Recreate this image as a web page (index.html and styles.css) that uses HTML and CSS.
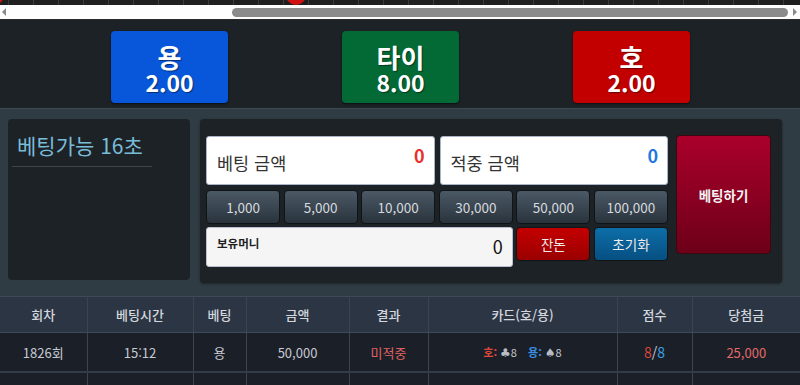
FILE: index.html
```html
<!DOCTYPE html>
<html lang="ko">
<head>
<meta charset="utf-8">
<title>베팅</title>
<link rel="stylesheet" href="styles.css">
</head>
<body>
<div class="timeline"><span class="dot dot-a"></span><span class="dot dot-b"></span></div>
<div class="hscroll">
  <span class="arr arr-l"></span>
  <div class="track"><div class="thumb"></div></div>
  <span class="arr arr-r"></span>
</div>
<div class="bets">
  <div class="bet bet-dragon"><div class="bet-name">용</div><div class="bet-odds">2.00</div></div>
  <div class="bet bet-tie"><div class="bet-name">타이</div><div class="bet-odds">8.00</div></div>
  <div class="bet bet-tiger"><div class="bet-name">호</div><div class="bet-odds">2.00</div></div>
</div>
<div class="board">
  <div class="timer"><div class="timer-title">베팅가능 16초</div></div>
  <div class="console">
    <div class="controls">
      <div class="amounts">
        <div class="amount"><span class="amount-label">베팅 금액</span><span class="amount-val val-red">0</span></div>
        <div class="amount"><span class="amount-label">적중 금액</span><span class="amount-val val-blue">0</span></div>
      </div>
      <div class="chips">
        <button class="chip">1,000</button>
        <button class="chip">5,000</button>
        <button class="chip">10,000</button>
        <button class="chip">30,000</button>
        <button class="chip">50,000</button>
        <button class="chip">100,000</button>
        <div class="wallet"><span class="wallet-label">보유머니</span><span class="wallet-val">0</span></div>
        <button class="act act-change">잔돈</button>
        <button class="act act-reset">초기화</button>
      </div>
    </div>
    <button class="place">베팅하기</button>
  </div>
</div>
<table class="history">
  <colgroup>
    <col class="c1"><col class="c2"><col class="c3"><col class="c4"><col class="c5"><col class="c6"><col class="c7"><col class="c8">
  </colgroup>
  <thead>
    <tr><th>회차</th><th>베팅시간</th><th>베팅</th><th>금액</th><th>결과</th><th>카드(호/용)</th><th>점수</th><th>당첨금</th></tr>
  </thead>
  <tbody>
    <tr>
      <td>1826회</td><td>15:12</td><td>용</td><td>50,000</td><td class="lose">미적중</td>
      <td class="cards"><span class="ct">호:</span> <span class="suit">♣</span>8 <span class="cd">용:</span> <span class="suit">♠</span>8</td>
      <td class="score"><span class="sr">8</span>/<span class="sb">8</span></td>
      <td class="win">25,000</td>
    </tr>
    <tr class="empty"><td></td><td></td><td></td><td></td><td></td><td></td><td></td><td></td></tr>
  </tbody>
</table>
</body>
</html>
```
FILE: styles.css
```css
html, body {
  margin: 0;
  padding: 0;
}
body {
  width: 800px;
  height: 385px;
  overflow: hidden;
  background: #1c2226;
  font-family: "Noto Sans CJK KR", "Noto Sans", sans-serif;
  color: #fff;
}
button {
  font-family: inherit;
  padding: 0;
  cursor: pointer;
}

/* timeline strip */
.timeline {
  position: relative;
  height: 5px;
  overflow: hidden;
  background-color: #1f1f1f;
  background-image: repeating-linear-gradient(90deg, transparent 0, transparent 8px, #3d3d3d 8px, #3d3d3d 9px, transparent 9px, transparent 25px);
}
.dot {
  position: absolute;
  width: 20px;
  height: 20px;
  border-radius: 50%;
  background: #d11212;
  top: -15px;
}
.dot-a { left: -16px; }
.dot-b { left: 286px; }

/* horizontal scrollbar */
.hscroll {
  display: flex;
  align-items: center;
  height: 14px;
  background: #fdfdfd;
  border-bottom: 1px solid #2b2b2b;
}
.arr {
  width: 0;
  height: 0;
  border-top: 4px solid transparent;
  border-bottom: 4px solid transparent;
}
.arr-l {
  margin-left: 2px;
  border-right: 4px solid #8a8a8a;
}
.arr-r {
  margin-right: 3px;
  border-left: 4px solid #8a8a8a;
}
.track {
  flex: 1;
  display: flex;
  justify-content: flex-end;
  padding-right: 5px;
}
.thumb {
  width: 556px;
  height: 9px;
  border-radius: 5px;
  background: #8b8b8b;
}

/* bet buttons */
.bets {
  height: 88px;
  box-sizing: border-box;
  padding-top: 11px;
  display: flex;
  justify-content: center;
  gap: 114px;
  padding-left: 1px;
}
.bet {
  width: 117px;
  height: 72px;
  border-radius: 4px;
  box-sizing: border-box;
  padding-top: 12px;
  text-align: center;
  font-weight: 700;
  box-shadow: 0 1px 2px rgba(0,0,0,.6);
  text-shadow: 1px 1px 1px rgba(0,0,0,.45);
}
.bet-dragon { background: #0857da; }
.bet-tie { background: #036935; }
.bet-tiger { background: #c20000; }
.bet-name {
  font-size: 26px;
  line-height: 27px;
}
.bet-odds {
  font-size: 23px;
  line-height: 24px;
}

/* board */
.board {
  display: flex;
  align-items: flex-start;
  gap: 10px;
  height: 188px;
  box-sizing: border-box;
  padding: 10px 18px 0 8px;
  background: #303c43;
  border-top: 1px solid #3d4a52;
}
.timer {
  width: 182px;
  height: 161px;
  box-sizing: border-box;
  padding: 12px 4px 0;
  background: #1c2226;
  border-radius: 4px;
}
.timer-title {
  width: 140px;
  padding: 0 0 7px 5px;
  box-sizing: border-box;
  font-size: 21px;
  line-height: 28px;
  color: #79bcd8;
  border-bottom: 1px solid #3b4448;
}
.console {
  flex: 1;
  display: flex;
  align-items: flex-start;
  gap: 8px;
  height: 164px;
  box-sizing: border-box;
  padding: 16px 11px 0 6px;
  background: #1c2226;
  border-radius: 4px;
  box-shadow: 0 1px 3px rgba(0,0,0,.4);
}
.controls {
  flex: 1;
  padding-top: 1px;
}
.amounts {
  display: flex;
  gap: 5px;
  margin-bottom: 5px;
}
.amount {
  flex: 1;
  height: 49px;
  box-sizing: border-box;
  display: flex;
  justify-content: space-between;
  align-items: flex-start;
  padding: 9px 9px 0 10px;
  background: #fff;
  border: 1px solid #aab4c8;
  border-radius: 3px;
}
.amount-label {
  font-size: 17.5px;
  line-height: 26px;
  margin-top: 4px;
  color: #333;
}
.amount-val {
  font-size: 18px;
  line-height: 18px;
  font-weight: 700;
}
.val-red { color: #e8302c; }
.val-blue { color: #1f7ae0; }

.chips {
  display: grid;
  grid-template-columns: repeat(6, 1fr);
  grid-template-rows: 34px 40px;
  column-gap: 3.5px;
  row-gap: 3px;
}
.chip {
  height: 34px;
  border: 1px solid #0f1417;
  border-radius: 4px;
  background: linear-gradient(#4b5966, #29333c);
  color: #d6dade;
  font-size: 13.5px;
}
.wallet {
  grid-column: span 4;
  display: flex;
  justify-content: space-between;
  align-items: flex-start;
  box-sizing: border-box;
  padding: 6px 9px 0 10px;
  background: #f5f5f5;
  border: 1px solid #b8c0d0;
  border-radius: 3px;
}
.wallet-label {
  font-size: 11.5px;
  line-height: 18px;
  font-weight: 700;
  color: #1e1e1e;
}
.wallet-val {
  font-size: 18px;
  line-height: 24px;
  color: #111;
}
.act {
  height: 34px;
  border: 1px solid #0f1417;
  border-radius: 4px;
  color: #ececec;
  font-size: 13.5px;
}
.act-change { background: linear-gradient(#c40000, #9a0000); }
.act-reset { background: linear-gradient(#0d6ea8, #064f82); }
.place {
  width: 95px;
  height: 119px;
  border: 1px solid #3a0810;
  border-radius: 4px;
  background: linear-gradient(#aa002b, #6d0019);
  color: #f2f2f2;
  font-size: 13.5px;
  font-weight: 700;
}

/* history table */
.history {
  width: 800px;
  table-layout: fixed;
  border-collapse: collapse;
  border-top: 1px solid #3f4a57;
  font-size: 13px;
}
.c1 { width: 87px; }
.c2 { width: 106px; }
.c3 { width: 53px; }
.c4 { width: 103px; }
.c5 { width: 79px; }
.c6 { width: 189px; }
.c7 { width: 75px; }
.c8 { width: 108px; }
.history th, .history td {
  text-align: center;
  padding: 0;
  border-left: 1px solid #3a4452;
}
.history th:first-child, .history td:first-child {
  border-left: 0;
}
.history th {
  height: 35px;
  background: #2c3544;
  color: #d3d7de;
  font-weight: 500;
  border-bottom: 1px solid #3f4a58;
}
.history td {
  height: 38px;
  background: #1b1f28;
  color: #c6cad2;
  border-bottom: 2px solid #333c49;
}
.history .empty td {
  height: 12px;
  border-bottom: 0;
}
.lose { color: #e06262 !important; }
.win { color: #e36a6a !important; }
.cards { font-size: 11px; }
.ct { color: #e0463c; font-weight: 700; }
.cd { color: #3a8ee0; font-weight: 700; margin-left: 8px; }
.suit { font-family: "DejaVu Sans", sans-serif; color: #b8bcc4; font-size: 12px; }
.score { font-size: 14px; }
.sr { color: #d9463b; }
.sb { color: #3aa0e0; }
```
